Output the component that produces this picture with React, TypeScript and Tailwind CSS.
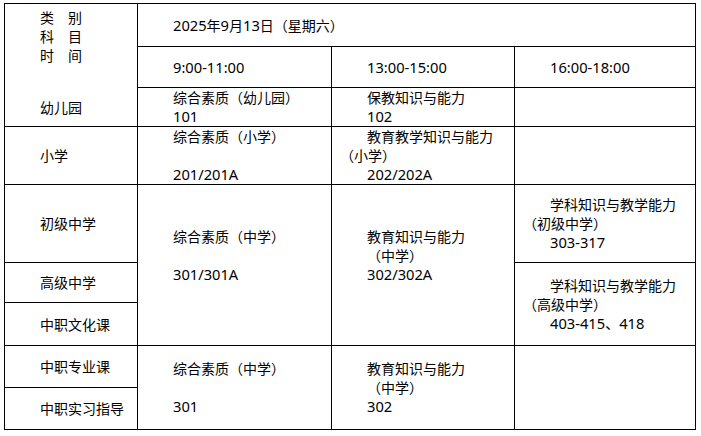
import React from 'react';

type Line = { text: string; indent?: boolean };

function Mixed({ text }: { text: string }) {
  const parts = text.split(/([\x20-\x7E]+)/).filter((p) => p !== '');
  return (
    <>
      {parts.map((p, i) =>
        /^[\x20-\x7E]+$/.test(p) ? (
          <span key={i} className="text-[14.7px]">
            {p}
          </span>
        ) : (
          <span key={i}>{p}</span>
        )
      )}
    </>
  );
}

// one table cell: lines are stacked and centred vertically, most lines carry a 2em indent
function Cell({ lines = [], className = '' }: { lines?: (Line | string)[]; className?: string }) {
  return (
    <div className={`flex flex-col justify-center bg-white pl-[8px] leading-[19px] ${className}`}>
      {lines.map((l, i) => {
        const line = typeof l === 'string' ? { text: l, indent: true } : l;
        if (line.text === '') return <div key={i} className="h-[19px]" />;
        return (
          <div key={i} className={`h-[19px] whitespace-nowrap ${line.indent !== false ? 'pl-[27px]' : ''}`}>
            <Mixed text={line.text} />
          </div>
        );
      })}
    </div>
  );
}

export default function App() {
  return (
    <div
      className="min-h-screen bg-white pt-[3px] pl-[4px] text-[14px] text-black"
      style={{ fontFamily: '"Noto Sans", "Noto Sans CJK SC", sans-serif' }}
    >
      <div className="grid w-fit grid-cols-[132px_193px_182px_180px] grid-rows-[42px_40px_38px_57px_77px_39px_42px_41px_41px] gap-px bg-black p-px">
        {/* header corner */}
        <div className="col-start-1 row-start-1 row-span-3 flex flex-col justify-between bg-white pl-[8px] pt-[4px] pb-[9px] leading-[19px]">
          <div className="pl-[27px]">
            <div>类　别</div>
            <div>科　目</div>
            <div>时　间</div>
          </div>
          <div className="pl-[27px]">幼儿园</div>
        </div>

        <Cell className="col-start-2 col-span-3 row-start-1" lines={['2025年9月13日（星期六）']} />

        <Cell className="col-start-2 row-start-2" lines={['9:00-11:00']} />
        <Cell className="col-start-3 row-start-2" lines={['13:00-15:00']} />
        <Cell className="col-start-4 row-start-2" lines={['16:00-18:00']} />

        {/* 幼儿园 */}
        <Cell className="col-start-2 row-start-3" lines={['综合素质（幼儿园）', '101']} />
        <Cell className="col-start-3 row-start-3" lines={['保教知识与能力', '102']} />
        <Cell className="col-start-4 row-start-3" />

        {/* 小学 */}
        <Cell className="col-start-1 row-start-4" lines={['小学']} />
        <Cell className="col-start-2 row-start-4" lines={['综合素质（小学）', '', '201/201A']} />
        <Cell
          className="col-start-3 row-start-4"
          lines={['教育教学知识与能力', { text: '（小学）', indent: false }, '202/202A']}
        />
        <Cell className="col-start-4 row-start-4" />

        {/* 中学 */}
        <Cell className="col-start-1 row-start-5" lines={['初级中学']} />
        <Cell className="col-start-2 row-start-5 row-span-3" lines={['综合素质（中学）', '', '301/301A', '']} />
        <Cell className="col-start-3 row-start-5 row-span-3" lines={['教育知识与能力', '（中学）', '302/302A', '']} />
        <Cell
          className="col-start-4 row-start-5"
          lines={['学科知识与教学能力', { text: '（初级中学）', indent: false }, '303-317']}
        />
        <Cell className="col-start-1 row-start-6" lines={['高级中学']} />
        <Cell
          className="col-start-4 row-start-6 row-span-2"
          lines={['学科知识与教学能力', { text: '（高级中学）', indent: false }, '403-415、418']}
        />
        <Cell className="col-start-1 row-start-7" lines={['中职文化课']} />

        {/* 中职 */}
        <Cell className="col-start-1 row-start-8" lines={['中职专业课']} />
        <Cell className="col-start-2 row-start-8 row-span-2" lines={['综合素质（中学）', '', '301']} />
        <Cell className="col-start-3 row-start-8 row-span-2" lines={['教育知识与能力', '（中学）', '302']} />
        <Cell className="col-start-4 row-start-8 row-span-2" />
        <Cell className="col-start-1 row-start-9" lines={['中职实习指导']} />
      </div>
    </div>
  );
}
